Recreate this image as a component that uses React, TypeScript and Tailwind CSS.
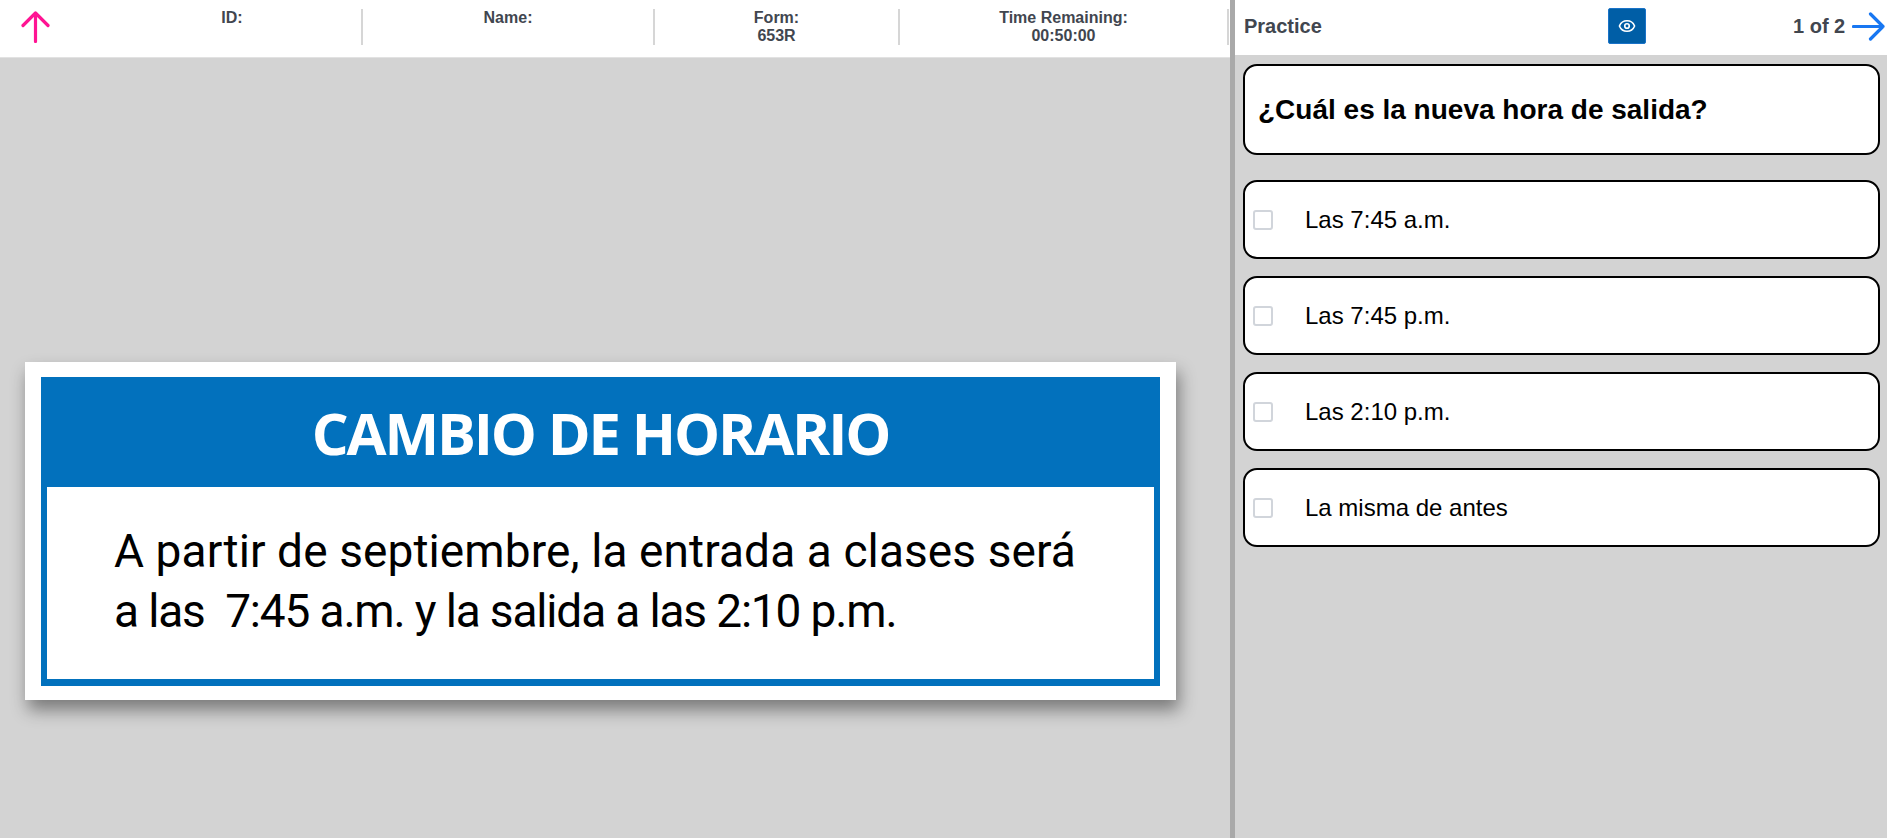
import { Eye } from "lucide-react";

const opciones = ["Las 7:45 a.m.", "Las 7:45 p.m.", "Las 2:10 p.m.", "La misma de antes"];

function ArrowUp() {
  return (
    <svg width="29" height="32" viewBox="0 0 29 32" fill="none" stroke="#ff1493" strokeWidth="3.2" strokeLinecap="round" strokeLinejoin="round">
      <path d="M14.5 2v28.5M2 14.5 14.5 2 27 14.5" />
    </svg>
  );
}

function ArrowRight() {
  return (
    <svg width="33" height="29" viewBox="0 0 33 29" fill="none" stroke="#1877f2" strokeWidth="3.2" strokeLinecap="round" strokeLinejoin="round">
      <path d="M1.5 14.5H31M18.5 2 31 14.5 18.5 27" />
    </svg>
  );
}

function InfoCol({ label, value, width }: { label: string; value?: string; width: string }) {
  return (
    <div className={`${width} h-[36px] shrink-0 border-r-2 border-[#d6d6d6] text-center text-[16px] leading-[18px] font-bold text-[#41464f]`}>
      <div>{label}</div>
      {value && <div>{value}</div>}
    </div>
  );
}

export default function App() {
  return (
    <div className="flex h-[838px] w-[1887px] overflow-hidden bg-[#d3d3d3] font-['Liberation_Sans',Arial,sans-serif]">
      <div className="w-[1230px] shrink-0">
        <header className="flex h-[58px] border-b border-[#e2e2e2] bg-white pt-[9px]">
          <div className="w-[103px] shrink-0 pl-[21px] pt-[2px]">
            <ArrowUp />
          </div>
          <InfoCol label="ID:" width="w-[260px]" />
          <InfoCol label="Name:" width="w-[292px]" />
          <InfoCol label="Form:" value="653R" width="w-[245px]" />
          <InfoCol label="Time Remaining:" value="00:50:00" width="w-[329px]" />
        </header>
        <div className="pl-[25px] pr-[54px] pt-[304px]">
          <div className="bg-white p-[15px_16px_14px] shadow-[3px_10px_16px_rgba(0,0,0,0.42)]">
            <div className="bg-[#0271bd] px-[6px] pb-[7px]">
              <h1 className="h-[110px] text-center font-['Open_Sans',sans-serif] text-[58px] leading-[112px] font-bold tracking-[-2.15px] text-white">
                CAMBIO DE HORARIO
              </h1>
              <div className="h-[192px] bg-white pl-[67px] pt-[34px] font-['Roboto',sans-serif] text-[46px] leading-[60px] font-[450] text-black">
                <p className="tracking-[0.1px] whitespace-nowrap">A partir de septiembre, la entrada a clases será</p>
                <p className="tracking-[-1.15px] whitespace-nowrap">a las&nbsp; 7:45 a.m. y la salida a las 2:10 p.m.</p>
              </div>
            </div>
          </div>
        </div>
      </div>
      <div className="w-[5px] shrink-0 bg-[#a9a9a9]" />
      <div className="flex-1">
        <div className="flex h-[55px] items-center bg-white pb-[3px] pl-[9px] pr-[2px]">
          <span className="w-[364px] shrink-0 text-[20px] font-bold text-[#41464f]">Practice</span>
          <button className="flex h-[36px] w-[38px] shrink-0 items-center justify-center rounded-[2px] border border-[#1a73c8] bg-[#005ea6]">
            <Eye size={18} color="white" strokeWidth={2.2} />
          </button>
          <span className="ml-[147px] shrink-0 text-[20px] font-bold whitespace-nowrap text-[#41464f]">1 of 2</span>
          <span className="ml-[7px] shrink-0">
            <ArrowRight />
          </span>
        </div>
        <div className="pl-[8px] pr-[7px] pt-[9px]">
          <div className="flex h-[91px] items-center rounded-[14px] border-2 border-black bg-white pl-[13px] text-[28px] font-bold text-black">
            ¿Cuál es la nueva hora de salida?
          </div>
          <div className="mt-[25px] flex flex-col gap-[17px]">
            {opciones.map((o) => (
              <div key={o} className="flex h-[79px] items-center rounded-[14px] border-2 border-black bg-white pl-[8px] text-[24px] text-black">
                <span className="h-[20px] w-[20px] shrink-0 rounded-[3px] border-2 border-[#d1d5db] bg-white" />
                <span className="ml-[32px]">{o}</span>
              </div>
            ))}
          </div>
        </div>
      </div>
    </div>
  );
}
